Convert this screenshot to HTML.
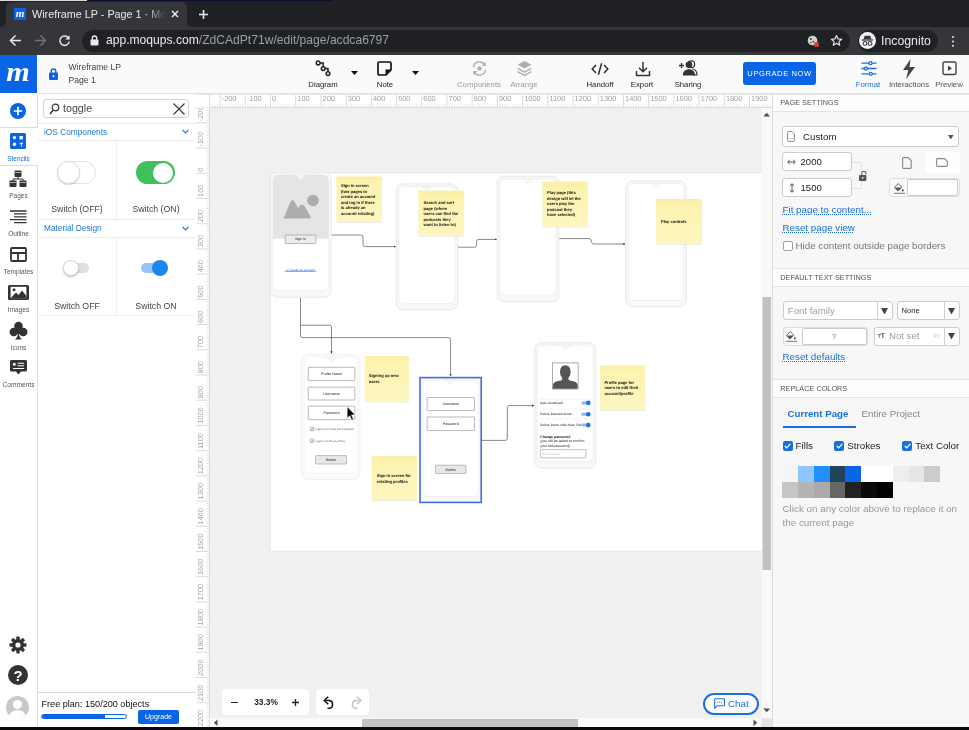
<!DOCTYPE html>
<html><head><meta charset="utf-8">
<style>
*{box-sizing:border-box;margin:0;padding:0}
html,body{width:969px;height:730px;overflow:hidden;background:#fff;font-family:"Liberation Sans",sans-serif;}
.abs{position:absolute}
#root{position:relative;width:969px;height:730px;overflow:hidden;background:#fff;will-change:transform}
/* chrome */
#tabbar{left:0;top:0;width:969px;height:27px;background:#202124}
#tab{left:6px;top:2px;width:181px;height:25px;background:#35363a;border-radius:7px 7px 0 0}
#navbar{left:0;top:27px;width:969px;height:28px;background:#35363a}
#omni{left:82px;top:30px;width:768px;height:22px;border-radius:11px;background:#202124}
.ct{color:#e8eaed;font-size:12px;white-space:nowrap}
/* app header */
#hdr{left:0;top:55px;width:969px;height:39px;background:#fafafa;border-bottom:1px solid #e2e2e2}
#logo{left:0;top:55px;width:37px;height:38px;background:#0a64e6}
.tb{font-size:7.750px;color:#222;text-align:center;white-space:nowrap}
.tb.dis{color:#9a9a9a}
/* left bar */
#lbar{left:0;top:93px;width:38px;height:637px;background:#fff;border-right:1px solid #e0e0e0}
.ll{font-size:6.5px;color:#555;text-align:center;width:37px;left:0;white-space:nowrap}
#lpanel{left:38px;top:94px;width:157px;height:636px;background:#fff}
/* canvas */
#canvas{left:195px;top:94px;width:577px;height:636px;background:#f0f0f0}
#rulerh{left:195px;top:94px;width:577px;height:13px;background:#fff}
#rulerv{left:195px;top:107px;width:13px;height:623px;background:#fff}
.rn{font-size:8px;color:#999;white-space:nowrap}
#page{left:270px;top:173px;width:492px;height:376px;background:#fff}
/* right panel */
#rpanel{left:772px;top:94px;width:197px;height:636px;background:#f7f7f7;border-left:1px solid #dcdcdc}
.sech{font-size:7px;color:#555;white-space:nowrap}
.link{font-size:9px;color:#1a6fd8;text-decoration:underline dotted;white-space:nowrap}
.inp{background:#fff;border:1px solid #ccc;border-radius:2px}
</style></head><body><div id="root">

<!-- ===== BROWSER CHROME ===== -->
<div id="tabbar" class="abs"></div>
<div class="abs" style="left:0;top:0;width:87px;height:1px;background:#dcd8d2"></div><div class="abs" style="left:87px;top:0;width:245px;height:1px;background:#10102c"></div>
<svg class="abs" style="left:0;top:0" width="200" height="27" viewBox="0 0 200 27"><path d="M0 27Q6 27 6 21V8Q6 2 12 2H181Q187 2 187 8V21Q187 27 193 27Z" fill="#35363a"/></svg>
<div class="abs" style="left:14px;top:8px;width:12px;height:12px;background:#0a64e6"></div>
<div class="abs" style="left:14px;top:7px;width:12px;height:12px;color:#fff;font:italic bold 11px 'Liberation Serif',serif;text-align:center;line-height:12px">m</div>
<div id="tabtitle" class="abs ct" style="left:32px;top:7px;font-size:10.8px;width:134px;overflow:hidden;line-height:14px;-webkit-mask-image:linear-gradient(90deg,#000 85%,transparent 100%)">Wireframe LP - Page 1 · Moqups</div>
<svg class="abs" style="left:171px;top:10px" width="8" height="8" viewBox="0 0 8 8"><path d="M1 1L7 7M7 1L1 7" stroke="#e8eaed" stroke-width="1.5" fill="none"/></svg>
<svg class="abs" style="left:198px;top:9px" width="11" height="11" viewBox="0 0 11 11"><path d="M5.5 1V10M1 5.5H10" stroke="#e8eaed" stroke-width="1.6" fill="none"/></svg>
<div id="navbar" class="abs"></div>
<svg class="abs" style="left:9px;top:34px" width="13" height="13" viewBox="0 0 13 13"><path d="M12 6.5H2M6.5 1.5L1.5 6.5L6.5 11.5" stroke="#e8eaed" stroke-width="1.5" fill="none"/></svg>
<svg class="abs" style="left:34px;top:34px" width="13" height="13" viewBox="0 0 13 13"><path d="M1 6.5H11M6.5 1.5L11.5 6.5L6.5 11.5" stroke="#6e7175" stroke-width="1.5" fill="none"/></svg>
<svg class="abs" style="left:58px;top:34px" width="13" height="13" viewBox="0 0 13 13"><path d="M10.6 4.2A4.7 4.7 0 1 0 11.2 7.6" stroke="#e8eaed" stroke-width="1.5" fill="none"/><path d="M11.6 1.2V5.4H7.4Z" fill="#e8eaed"/></svg>
<div id="omni" class="abs"></div>
<svg class="abs" style="left:90px;top:35px" width="9" height="11" viewBox="0 0 9 11"><rect x="0.5" y="4.5" width="8" height="6" rx="1" fill="#e8eaed"/><path d="M2.3 5V3.2a2.2 2.2 0 0 1 4.4 0V5" stroke="#e8eaed" stroke-width="1.3" fill="none"/></svg>
<div id="url" class="abs ct" style="left:106px;top:33px;font-size:12.1px;line-height:14px">app.moqups.com<span style="color:#9aa0a6">/ZdCAdPt71w/edit/page/acdca6797</span></div>
<!-- cookie/eye icon -->
<svg class="abs" style="left:806px;top:34px" width="14" height="14" viewBox="0 0 14 14"><circle cx="6.5" cy="6.5" r="4.8" fill="#cfd1d4"/><circle cx="4.8" cy="5" r="1" fill="#35363a"/><circle cx="7.5" cy="7.6" r="0.9" fill="#35363a"/><circle cx="5" cy="8.5" r="0.7" fill="#35363a"/><rect x="8.3" y="8.3" width="4.4" height="4.4" rx="0.6" fill="#e0452c"/></svg>
<svg class="abs" style="left:830px;top:34px" width="13" height="13" viewBox="0 0 14 14"><path d="M7 1.6L8.6 5.3L12.6 5.6L9.5 8.2L10.5 12.1L7 10L3.5 12.1L4.5 8.2L1.4 5.6L5.4 5.3Z" stroke="#e8eaed" stroke-width="1.2" fill="none" stroke-linejoin="round"/></svg>
<div class="abs" style="left:858px;top:30px;width:80px;height:22px;border-radius:11px;background:#202124"></div>
<div class="abs" style="left:859px;top:32px;width:17px;height:17px;border-radius:50%;background:#f1f3f4"></div>
<svg class="abs" style="left:861px;top:35px" width="13" height="12" viewBox="0 0 13 12"><path d="M3.6 0.8h5.8l1 3.4H2.6Z" fill="#35363a"/><rect x="0.8" y="4.4" width="11.4" height="1.2" fill="#35363a"/><circle cx="4" cy="8.4" r="1.9" fill="none" stroke="#35363a" stroke-width="1.1"/><circle cx="9" cy="8.4" r="1.9" fill="none" stroke="#35363a" stroke-width="1.1"/></svg>
<div class="abs ct" style="left:881px;top:34px;font-size:12.3px;line-height:14px">Incognito</div>
<div class="abs" style="left:951.8px;top:35.5px;width:2.6px;height:2.6px;border-radius:50%;background:#e8eaed;box-shadow:0 4.4px 0 #e8eaed,0 8.8px 0 #e8eaed"></div>

<!-- ===== APP HEADER ===== -->
<div id="hdr" class="abs"></div>
<div id="logo" class="abs"></div>
<div class="abs" style="left:0;top:55px;width:37px;height:37px;color:#fff;font:italic bold 28px 'Liberation Serif',serif;text-align:center;line-height:37px;transform:translate(-0.5px,-2.2px) scaleX(1.08)">m</div>
<!-- lock -->
<svg class="abs" style="left:49px;top:68px" width="9" height="12" viewBox="0 0 9 12"><rect x="0" y="4.5" width="9" height="7.5" rx="1" fill="#0a64e6"/><path d="M2.2 5V3.3a2.3 2.3 0 0 1 4.6 0V5" stroke="#0a64e6" stroke-width="1.4" fill="none"/><circle cx="4.5" cy="8.2" r="1" fill="#fff"/></svg>
<div class="abs" style="left:68.5px;top:62px;font-size:8.6px;color:#444;line-height:10px;white-space:nowrap">Wireframe LP</div>
<div class="abs" style="left:68.5px;top:75px;font-size:8.6px;color:#444;line-height:10px;white-space:nowrap">Page 1</div>

<!-- Diagram -->
<svg class="abs" style="left:315px;top:60px" width="17" height="17" viewBox="0 0 17 17"><g fill="none" stroke="#222" stroke-width="1.5"><circle cx="3.2" cy="3" r="1.9"/><circle cx="8.2" cy="8.6" r="1.9"/><circle cx="13" cy="13.6" r="1.9"/><path d="M5 3H8.2V6.7M10.1 8.6H13V11.7"/></g></svg>
<div class="abs tb" style="left:303px;top:80px;width:40px">Diagram</div>
<svg class="abs" style="left:351px;top:71px" width="7" height="4" viewBox="0 0 7 4"><path d="M0 0H7L3.5 4Z" fill="#111"/></svg>
<!-- Note -->
<svg class="abs" style="left:377px;top:61px" width="15" height="15" viewBox="0 0 15 15"><path d="M2.5 1H12.5A1.5 1.5 0 0 1 14 2.500V9L9 14H2.5A1.500 1.500 0 0 1 1 12.500V2.500A1.500 1.500 0 0 1 2.500 1Z" fill="none" stroke="#111" stroke-width="1.7"/><path d="M14 8.500L8.500 14V8.500Z" fill="#111"/></svg>
<div class="abs tb" style="left:365px;top:80px;width:40px">Note</div>
<svg class="abs" style="left:412px;top:71px" width="7" height="4" viewBox="0 0 7 4"><path d="M0 0H7L3.5 4Z" fill="#111"/></svg>
<!-- Components -->
<svg class="abs" style="left:471px;top:60px" width="17" height="17" viewBox="0 0 17 17"><g fill="none" stroke="#b0b0b0" stroke-width="1.5"><path d="M2.5 7.5A6 6 0 0 1 13.8 5.200"/><path d="M14.500 9.500A6 6 0 0 1 3.200 11.800"/></g><path d="M14.800 1.800V6H10.600Z" fill="#b0b0b0"/><path d="M2.200 15.200V11H6.400Z" fill="#b0b0b0"/><circle cx="8.500" cy="8.500" r="2.200" fill="#b0b0b0"/></svg>
<div class="abs tb dis" style="left:452px;top:80px;width:54px">Components</div>
<!-- Arrange -->
<svg class="abs" style="left:516px;top:60px" width="17" height="17" viewBox="0 0 17 17"><path d="M8.500 1L15.500 4.800L8.500 8.600L1.500 4.800Z" fill="#b0b0b0"/><path d="M1.500 8.300L8.500 12.100L15.500 8.300M1.500 11.600L8.500 15.400L15.500 11.600" fill="none" stroke="#b0b0b0" stroke-width="1.400"/></svg>
<div class="abs tb dis" style="left:504px;top:80px;width:40px">Arrange</div>
<!-- Handoff -->
<svg class="abs" style="left:591px;top:62px" width="18" height="14" viewBox="0 0 18 14"><path d="M5 3L1.200 7L5 11M13 3L16.800 7L13 11M10.600 1.200L7.400 12.800" fill="none" stroke="#2a2a2a" stroke-width="1.500"/></svg>
<div class="abs tb" style="left:580px;top:80px;width:40px">Handoff</div>
<!-- Export -->
<svg class="abs" style="left:635px;top:61px" width="16" height="16" viewBox="0 0 16 16"><g fill="none" stroke="#333" stroke-width="1.500"><path d="M8 1V10.500M4 6.800L8 10.800L12 6.800"/><path d="M1.500 10V14.500H14.500V10"/></g></svg>
<div class="abs tb" style="left:622px;top:80px;width:40px">Export</div>
<!-- Sharing -->
<svg class="abs" style="left:678px;top:60px" width="20" height="16" viewBox="0 0 20 16"><path d="M1 5.500H6M3.500 3V8" stroke="#333" stroke-width="1.300" fill="none"/><circle cx="13.300" cy="4.300" r="3.400" fill="none" stroke="#333" stroke-width="1.200"/><path d="M14.500 9C18 9.500 19 12 19 15H15" fill="none" stroke="#333" stroke-width="1.200"/><circle cx="11" cy="4.800" r="3.300" fill="#333"/><path d="M4.800 15.500C4.800 11.500 7.500 9.300 11 9.300S17 11.500 17 15.500Z" fill="#333"/></svg>
<div class="abs tb" style="left:668px;top:80px;width:40px">Sharing</div>
<!-- Upgrade -->
<div class="abs" style="left:743px;top:62px;width:73px;height:23px;border-radius:3px;background:#0a64e6;color:#fff;font-size:7.600px;letter-spacing:.55px;text-align:center;line-height:23px;white-space:nowrap">UPGRADE NOW</div>
<!-- Format -->
<svg class="abs" style="left:861px;top:61px" width="16" height="15" viewBox="0 0 16 15"><g stroke="#1a6fe0" stroke-width="1.300" fill="#fafafa"><path d="M0.500 2.200H15.500M0.500 7.500H15.500M0.500 12.800H15.500" /><circle cx="9.500" cy="2.200" r="1.500"/><circle cx="4.800" cy="7.500" r="1.500"/><circle cx="9.800" cy="12.800" r="1.500"/></g></svg>
<div class="abs tb" style="left:848px;top:80px;width:40px;color:#1a6fe0">Format</div>
<!-- Interactions -->
<svg class="abs" style="left:901.500px;top:58.500px" width="14" height="20" viewBox="0 0 13 19"><path d="M8 0L0.800 10.500H5.800L3.800 19L12.200 7.500H7Z" fill="#444"/></svg>
<div class="abs tb" style="left:884px;top:80px;width:50px;color:#555">Interactions</div>
<!-- Preview -->
<svg class="abs" style="left:942px;top:61px" width="15" height="15" viewBox="0 0 15 15"><rect x="1" y="1" width="13" height="12.500" rx="1.500" fill="none" stroke="#444" stroke-width="1.400"/><path d="M6 4.500L10 7.300L6 10Z" fill="#444"/></svg>
<div class="abs tb" style="left:929px;top:80px;width:40px;color:#555">Preview</div>

<!-- ===== LEFT BAR ===== -->
<div id="lbar" class="abs"></div>
<div class="abs" style="left:0;top:127px;width:38px;height:1px;background:#dcdcdc"></div>
<div class="abs" style="left:0;top:128px;width:38px;height:37px;background:#fff"></div>
<div class="abs" style="left:0;top:165px;width:38px;height:1px;background:#dcdcdc"></div>
<!-- plus -->
<div class="abs" style="left:10px;top:102.500px;width:16px;height:16px;border-radius:50%;background:#0a64e6"></div>
<svg class="abs" style="left:13px;top:105.500px" width="10" height="10" viewBox="0 0 10 10"><path d="M5 0.800V9.200M0.800 5H9.200" stroke="#fff" stroke-width="1.700"/></svg>
<!-- stencils -->
<svg class="abs" style="left:10px;top:133px" width="16" height="16" viewBox="0 0 16 16"><rect width="16" height="16" rx="1.500" fill="#0a64e6"/><circle cx="4.500" cy="4.600" r="1.700" fill="#fff"/><rect x="9.500" y="3" width="3.400" height="3.400" fill="#fff"/><circle cx="4.500" cy="11.300" r="1.700" fill="#fff"/><path d="M9.600 9.800H13V10.800H11.800V13.400H10.800V10.800H9.600Z" fill="#fff"/></svg>
<div class="abs ll" style="top:155px;color:#1a6fe0;font-size:6.400px;line-height:8px">Stencils</div>
<!-- pages -->
<svg class="abs" style="left:9px;top:170px" width="18" height="18" viewBox="0 0 18 18"><g fill="#333"><rect x="5.500" y="0.500" width="7" height="6.500" rx="1"/><rect x="0.500" y="10.500" width="7" height="6.500" rx="1"/><rect x="10.500" y="10.500" width="7" height="6.500" rx="1"/></g><path d="M9 7V9H4V10.500M9 9H14V10.500" stroke="#333" stroke-width="1" fill="none"/><path d="M6 2.500H12M1 12.500H7M11 12.500H17" stroke="#fff" stroke-width=".6"/></svg>
<div class="abs ll" style="top:192px;font-size:6.500px;line-height:8px">Pages</div>
<!-- outline -->
<svg class="abs" style="left:10px;top:210px" width="17" height="14" viewBox="0 0 17 14"><path d="M0 1H16.500M4 3.900H16.500M4 6.800H16.500M0 9.700H16.500M4 12.600H16.500" stroke="#333" stroke-width="1.300"/></svg>
<div class="abs ll" style="top:230px;font-size:6.500px;line-height:8px">Outline</div>
<!-- templates -->
<svg class="abs" style="left:10px;top:247px" width="17" height="15" viewBox="0 0 17 15"><rect x="1" y="1" width="15" height="13" rx="1" fill="none" stroke="#333" stroke-width="1.800"/><path d="M1 6H16M8 6V14" stroke="#333" stroke-width="1.800"/></svg>
<div class="abs ll" style="top:268px;font-size:6.500px;line-height:8px">Templates</div>
<!-- images -->
<svg class="abs" style="left:8px;top:285px" width="21" height="15" viewBox="0 0 21 15"><rect x="0" y="0" width="21" height="15" rx="1.500" fill="#333"/><rect x="2.600" y="1.800" width="15.800" height="11.400" fill="#fff"/><path d="M2.600 13.200L8 7.500L10.500 10L14 5.500L18.400 11V13.200Z" fill="#333"/><circle cx="6" cy="4.800" r="1.500" fill="#333"/></svg>
<div class="abs ll" style="top:306px;font-size:6.500px;line-height:8px">Images</div>
<!-- icons (club) -->
<svg class="abs" style="left:9px;top:321px" width="19" height="19" viewBox="0 0 19 19"><g fill="#333"><circle cx="9.500" cy="5" r="4.300"/><circle cx="4.800" cy="11" r="4.300"/><circle cx="14.200" cy="11" r="4.300"/><path d="M9.500 8C9.500 14 8 17 6 18.500H13C11 17 9.500 14 9.500 8Z"/><rect x="7" y="8" width="5" height="5"/></g></svg>
<div class="abs ll" style="top:344px;font-size:6.500px;line-height:8px">Icons</div>
<!-- comments -->
<svg class="abs" style="left:10px;top:360px" width="17" height="15" viewBox="0 0 17 15"><path d="M1.500 0H15.500A1.500 1.500 0 0 1 17 1.500V10A1.500 1.500 0 0 1 15.500 11.500H11L8.500 14.500L6 11.500H1.500A1.500 1.500 0 0 1 0 10V1.500A1.500 1.500 0 0 1 1.500 0Z" fill="#333"/><circle cx="4.300" cy="4.200" r="1.500" fill="#fff"/><path d="M7.500 3.300H14M7.500 5.800H14M3 8.500H14" stroke="#fff" stroke-width="1.100"/></svg>
<div class="abs ll" style="top:381px;font-size:6.600px;line-height:8px">Comments</div>
<!-- gear -->
<svg class="abs" style="left:9px;top:636px" width="18" height="18" viewBox="0 0 18 18"><g fill="#333"><circle cx="9" cy="9" r="6"/><g><rect x="7.300" y="0.500" width="3.400" height="17" rx=".8"/><rect x="7.300" y="0.500" width="3.400" height="17" rx=".8" transform="rotate(45 9 9)"/><rect x="7.300" y="0.500" width="3.400" height="17" rx=".8" transform="rotate(90 9 9)"/><rect x="7.300" y="0.500" width="3.400" height="17" rx=".8" transform="rotate(135 9 9)"/></g></g><circle cx="9" cy="9" r="2.600" fill="#fff"/></svg>
<!-- help -->
<div class="abs" style="left:8px;top:665px;width:20px;height:20px;border-radius:50%;background:#333;color:#fff;font:bold 15px 'Liberation Sans',sans-serif;text-align:center;line-height:21px">?</div>
<!-- avatar -->
<div class="abs" style="left:6px;top:696px;width:23px;height:23px;border-radius:50%;background:#c8c8c8;overflow:hidden"><div class="abs" style="left:7px;top:4px;width:9px;height:9px;border-radius:50%;background:#fff"></div><div class="abs" style="left:3px;top:14px;width:17px;height:14px;border-radius:50%;background:#fff"></div></div>

<div id="lpanel" class="abs"></div>
<!-- search -->
<div class="abs" style="left:43px;top:99px;width:146px;height:19px;border:1px solid #d4d4d4;border-radius:3px;background:#fff"></div>
<svg class="abs" style="left:49px;top:103px" width="11" height="12" viewBox="0 0 11 12"><circle cx="6.500" cy="4.500" r="3.300" fill="none" stroke="#333" stroke-width="1.200"/><path d="M4.300 7L1 11" stroke="#333" stroke-width="1.400"/></svg>
<div class="abs" style="left:63px;top:102px;font-size:10.700px;color:#444;line-height:13px">toggle</div>
<svg class="abs" style="left:173px;top:103px" width="12" height="12" viewBox="0 0 12 12"><path d="M0.500 0.500L11.500 11.500M11.500 0.500L0.500 11.500" stroke="#333" stroke-width="1.100"/></svg>
<!-- iOS -->
<div class="abs" style="left:38px;top:123px;width:157px;height:1px;background:#ececec"></div>
<div class="abs" style="left:44px;top:127px;font-size:8.300px;color:#1a78d6;line-height:10px;white-space:nowrap">iOS Components</div>
<svg class="abs" style="left:182px;top:129px" width="7" height="5" viewBox="0 0 7 5"><path d="M0.500 0.800L3.500 3.800L6.500 0.800" fill="none" stroke="#1a78d6" stroke-width="1.200"/></svg>
<div class="abs" style="left:38px;top:140px;width:157px;height:1px;background:#ececec"></div>
<div class="abs" style="left:116px;top:141px;width:1px;height:78px;background:#f1f1f1"></div>
<div class="abs" style="left:57px;top:161px;width:39px;height:23px;border-radius:12px;border:1.500px solid #e2e2e2;background:#fff"></div>
<div class="abs" style="left:57px;top:161px;width:23px;height:23px;border-radius:50%;border:1px solid #dedede;background:#fff;box-shadow:0 1px 1.500px rgba(0,0,0,.15)"></div>
<div class="abs" style="left:136px;top:161px;width:39px;height:23px;border-radius:12px;background:#3ec15a"></div>
<div class="abs" style="left:153px;top:162.500px;width:20px;height:20px;border-radius:50%;background:#fff"></div>
<div class="abs" style="left:38px;top:204px;width:78px;text-align:center;font-size:8.750px;color:#444;line-height:11px;white-space:nowrap">Switch (OFF)</div>
<div class="abs" style="left:117px;top:204px;width:78px;text-align:center;font-size:8.750px;color:#444;line-height:11px;white-space:nowrap">Switch (ON)</div>
<!-- Material -->
<div class="abs" style="left:38px;top:219px;width:157px;height:1px;background:#ececec"></div>
<div class="abs" style="left:44px;top:223px;font-size:8.300px;color:#1a78d6;line-height:10px;white-space:nowrap">Material Design</div>
<svg class="abs" style="left:182px;top:226px" width="7" height="5" viewBox="0 0 7 5"><path d="M0.500 0.800L3.500 3.800L6.500 0.800" fill="none" stroke="#1a78d6" stroke-width="1.200"/></svg>
<div class="abs" style="left:38px;top:237px;width:157px;height:1px;background:#ececec"></div>
<div class="abs" style="left:116px;top:238px;width:1px;height:77px;background:#f1f1f1"></div>
<div class="abs" style="left:38px;top:315px;width:157px;height:1px;background:#f0f0f0"></div>
<div class="abs" style="left:68px;top:263px;width:21px;height:10px;border-radius:5px;background:#e0e0e0"></div>
<div class="abs" style="left:63px;top:260px;width:16px;height:16px;border-radius:50%;background:#fff;border:1px solid #d8d8d8;box-shadow:0 1px 2px rgba(0,0,0,.25)"></div>
<div class="abs" style="left:141px;top:263px;width:21px;height:10px;border-radius:5px;background:#93c5fb"></div>
<div class="abs" style="left:152px;top:260px;width:16px;height:16px;border-radius:50%;background:#1f85ea"></div>
<div class="abs" style="left:38px;top:301px;width:78px;text-align:center;font-size:8.750px;color:#444;line-height:11px;white-space:nowrap">Switch OFF</div>
<div class="abs" style="left:117px;top:301px;width:78px;text-align:center;font-size:8.750px;color:#444;line-height:11px;white-space:nowrap">Switch ON</div>
<!-- free plan -->
<div class="abs" style="left:38px;top:692px;width:157px;height:1px;background:#d8d8d8"></div>
<div class="abs" style="left:41.500px;top:699px;font-size:9.100px;color:#111;line-height:11px;white-space:nowrap">Free plan: 150/200 objects</div>
<div class="abs" style="left:41px;top:714px;width:86px;height:5px;border-radius:3px;border:1px solid #0a64e6;background:#fff;overflow:hidden"><div style="width:63px;height:5px;background:#0a64e6;margin-top:-1px"></div></div>
<div class="abs" style="left:138px;top:710px;width:41px;height:14px;border-radius:2px;background:#0a64e6;color:#fff;font-size:7px;text-align:center;line-height:14px">Upgrade</div>
<div class="abs" style="left:195px;top:94px;width:1px;height:633px;background:#d8d8d8"></div>

<!-- ===== CANVAS ===== -->
<svg class="abs" style="left:195px;top:94px" width="577" height="633" viewBox="195 94 577 633" font-family="Liberation Sans, sans-serif" text-rendering="geometricPrecision">
<defs><linearGradient id="ng" x1="0" y1="0" x2="0" y2="1"><stop offset="0" stop-color="#fbefa2"/><stop offset=".15" stop-color="#fcf3b0"/><stop offset="1" stop-color="#fdf6bf"/></linearGradient><marker id="ah" markerWidth="4" markerHeight="4" refX="3.2" refY="2" orient="auto"><path d="M0 0.500L3.400 2L0 3.500Z" fill="#333"/></marker></defs>
<rect x="195" y="94" width="577" height="633" fill="#f0f0f0"/>
<rect x="270.5" y="173.3" width="501.5" height="378" fill="#fff"/>
<rect x="270" y="172.8" width="501.5" height="378.5" fill="none" stroke="#e6e6e6" stroke-width="1"/>
<path d="M331 235H361Q363 235 363 237V244.500Q363 246.600 365 246.600H396" fill="none" stroke="#555" stroke-width="0.700" marker-end="url(#ah)"/>
<path d="M457.500 247.200H474.500Q476.500 247.200 476.500 245.200V241.400Q476.500 239.400 478.500 239.400H497" fill="none" stroke="#555" stroke-width="0.700" marker-end="url(#ah)"/>
<path d="M559 238.600H589Q590.500 238.600 591 240L592 243Q592.500 244 594 244H625.500" fill="none" stroke="#555" stroke-width="0.700" marker-end="url(#ah)"/>
<path d="M300.500 297V335.500Q300.500 337.600 302.500 337.600H448.500Q450.600 337.600 450.600 339.600V376" fill="none" stroke="#555" stroke-width="0.700" marker-end="url(#ah)"/>
<path d="M300.500 325.200H329.500Q331.500 325.200 331.500 327.200V353.500" fill="none" stroke="#555" stroke-width="0.700" marker-end="url(#ah)"/>
<path d="M482 440.400H505.300Q507.300 440.400 507.300 438.400V407.600Q507.300 405.600 509.300 405.600H534.300" fill="none" stroke="#555" stroke-width="0.700" marker-end="url(#ah)"/>
<rect x="270.5" y="172.3" width="60.6" height="125" rx="6.500" fill="#f8f8f8" stroke="#e9e9e9" stroke-width="1"/>
<rect x="273" y="174.9" width="55.6" height="116" rx="5" fill="#fff" stroke="#ebebeb" stroke-width="0.800"/>
<path d="M273 179.9A5 5 0 0 1 278 174.9H323.6A5 5 0 0 1 328.6 179.9V238.800H273Z" fill="#e5e5e5"/>
<path d="M295 174.9Q297 174.9 297.7 176.6Q299.1 179.5 300.6 179.5Q302.1 179.5 303.5 176.6Q304.2 174.9 306.2 174.9Z" fill="#fcfcfc" stroke="#e9e9e9" stroke-width="0.700"/>
<circle cx="300.6" cy="176.5" r="1.100" fill="#f8f8f8" stroke="#e8e8e8" stroke-width="0.500"/>
<path d="M283.500 218.500L290.500 201.500Q292.500 198.500 294.500 201.500L298 208L300.500 205Q302.500 203.500 304.500 206L310.500 216.500Q311.500 218.500 309.500 218.500Z" fill="#adadad"/>
<circle cx="313" cy="200.500" r="5.800" fill="#adadad"/>
<rect x="285.2" y="235" width="30.6" height="8.5" rx="0.600" fill="#ececec" stroke="#8e8e8e" stroke-width="0.600"/>
<text x="300.5" y="240.45" font-size="3.6" text-anchor="middle" fill="#1c1c1c">Sign In</text>
<text x="300.500" y="270.600" font-size="3.200" text-anchor="middle" fill="#1a73e8" text-decoration="underline">or create an account</text>
<path d="M284.300 271.500H316.700" stroke="#1a73e8" stroke-width="0.400"/>
<rect x="337.3" y="178" width="44.3" height="45" fill="#000" opacity=".07"/>
<rect x="336.3" y="176.5" width="45.3" height="45.5" fill="url(#ng)"/>
<text x="341" y="187" font-size="4.05" font-weight="bold" fill="#15120a">Sign in screen</text>
<text x="341" y="192.6" font-size="4.05" font-weight="bold" fill="#15120a">(two pages to</text>
<text x="341" y="198.2" font-size="4.05" font-weight="bold" fill="#15120a">create an account</text>
<text x="341" y="203.8" font-size="4.05" font-weight="bold" fill="#15120a">and log in if there</text>
<text x="341" y="209.4" font-size="4.05" font-weight="bold" fill="#15120a">is already an</text>
<text x="341" y="215" font-size="4.05" font-weight="bold" fill="#15120a">account existing)</text>
<rect x="396.3" y="183.9" width="61.2" height="126" rx="6.500" fill="#f8f8f8" stroke="#e9e9e9" stroke-width="1"/>
<rect x="398.8" y="186.5" width="56.2" height="117" rx="5" fill="#fff" stroke="#ebebeb" stroke-width="0.800"/>
<path d="M421.4 186.5Q423.4 186.5 424.1 188.2Q425.5 191.1 427 191.1Q428.5 191.1 429.9 188.2Q430.6 186.5 432.6 186.5Z" fill="#fcfcfc" stroke="#e9e9e9" stroke-width="0.700"/>
<circle cx="427" cy="188.1" r="1.100" fill="#f8f8f8" stroke="#e8e8e8" stroke-width="0.500"/>
<rect x="419.3" y="192.2" width="44.8" height="44.7" fill="#000" opacity=".07"/>
<rect x="418.3" y="190.7" width="45.8" height="45.2" fill="url(#ng)"/>
<text x="423.6" y="203.9" font-size="4.05" font-weight="bold" fill="#15120a">Search and sort</text>
<text x="423.6" y="209.5" font-size="4.05" font-weight="bold" fill="#15120a">page (where</text>
<text x="423.6" y="215.1" font-size="4.05" font-weight="bold" fill="#15120a">users can find the</text>
<text x="423.6" y="220.7" font-size="4.05" font-weight="bold" fill="#15120a">podcasts they</text>
<text x="423.6" y="226.3" font-size="4.05" font-weight="bold" fill="#15120a">want to listen to)</text>
<rect x="497.3" y="176.3" width="61.5" height="125.3" rx="6.500" fill="#f8f8f8" stroke="#e9e9e9" stroke-width="1"/>
<rect x="499.8" y="178.9" width="56.5" height="116.3" rx="5" fill="#fff" stroke="#ebebeb" stroke-width="0.800"/>
<path d="M522.4 178.9Q524.4 178.9 525.1 180.6Q526.5 183.5 528 183.5Q529.5 183.5 530.9 180.6Q531.6 178.9 533.6 178.9Z" fill="#fcfcfc" stroke="#e9e9e9" stroke-width="0.700"/>
<circle cx="528" cy="180.5" r="1.100" fill="#f8f8f8" stroke="#e8e8e8" stroke-width="0.500"/>
<rect x="543.4" y="182.9" width="44.2" height="44.7" fill="#000" opacity=".07"/>
<rect x="542.4" y="181.4" width="45.2" height="45.2" fill="url(#ng)"/>
<text x="547.1" y="194" font-size="4.05" font-weight="bold" fill="#15120a">Play page (this</text>
<text x="547.1" y="199.6" font-size="4.05" font-weight="bold" fill="#15120a">design will let the</text>
<text x="547.1" y="205.2" font-size="4.05" font-weight="bold" fill="#15120a">users play the</text>
<text x="547.1" y="210.8" font-size="4.05" font-weight="bold" fill="#15120a">podcast they</text>
<text x="547.1" y="216.4" font-size="4.05" font-weight="bold" fill="#15120a">have selected)</text>
<rect x="625.7" y="181" width="60.6" height="125.8" rx="6.500" fill="#f8f8f8" stroke="#e9e9e9" stroke-width="1"/>
<rect x="628.2" y="183.6" width="55.6" height="116.8" rx="5" fill="#fff" stroke="#ebebeb" stroke-width="0.800"/>
<path d="M650.4 183.6Q652.4 183.6 653.1 185.3Q654.5 188.2 656 188.2Q657.5 188.2 658.9 185.3Q659.6 183.6 661.6 183.6Z" fill="#fcfcfc" stroke="#e9e9e9" stroke-width="0.700"/>
<circle cx="656" cy="185.2" r="1.100" fill="#f8f8f8" stroke="#e8e8e8" stroke-width="0.500"/>
<rect x="656.9" y="200.4" width="44.8" height="44.7" fill="#000" opacity=".07"/>
<rect x="655.9" y="198.9" width="45.8" height="45.2" fill="url(#ng)"/>
<text x="661" y="222.8" font-size="4.05" font-weight="bold" fill="#15120a">Play controls</text>
<rect x="301.6" y="354.5" width="58.3" height="125.1" rx="6.500" fill="#fbfbfb" stroke="#f1f1f1" stroke-width="1"/>
<rect x="304.1" y="357.1" width="53.3" height="116.1" rx="5" fill="#fff" stroke="#f3f3f3" stroke-width="0.800"/>
<path d="M325.9 357.1Q327.9 357.1 328.6 358.8Q330 361.7 331.5 361.7Q333 361.7 334.4 358.8Q335.1 357.1 337.1 357.1Z" fill="#fcfcfc" stroke="#e9e9e9" stroke-width="0.700"/>
<circle cx="331.5" cy="358.7" r="1.100" fill="#f8f8f8" stroke="#e8e8e8" stroke-width="0.500"/>
<rect x="308.2" y="367.3" width="46.6" height="13.3" rx="0.600" fill="#fff" stroke="#8c8c8c" stroke-width="0.600"/>
<text x="331.5" y="375.15" font-size="3.6" text-anchor="middle" fill="#1c1c1c">Profile Name</text>
<rect x="308.2" y="387.1" width="46.6" height="12.9" rx="0.600" fill="#fff" stroke="#8c8c8c" stroke-width="0.600"/>
<text x="331.5" y="394.75" font-size="3.6" text-anchor="middle" fill="#1c1c1c">Username</text>
<rect x="308.2" y="406.2" width="46.6" height="13.5" rx="0.600" fill="#fff" stroke="#8c8c8c" stroke-width="0.600"/>
<text x="331.5" y="414.15" font-size="3.6" text-anchor="middle" fill="#1c1c1c">Password</text>
<rect x="310.300" y="427.3" width="3.400" height="3.400" rx=".4" fill="#fff" stroke="#777" stroke-width="0.500"/>
<path d="M311 429L311.900 429.9L313.300 428.1" stroke="#555" stroke-width="0.500" fill="none"/>
<text x="315" y="429.9" font-size="2.600" fill="#555">I agree with Terms and Conditions</text>
<rect x="310.300" y="439" width="3.400" height="3.400" rx=".4" fill="#fff" stroke="#777" stroke-width="0.500"/>
<path d="M311 440.7L311.900 441.6L313.300 439.8" stroke="#555" stroke-width="0.500" fill="none"/>
<text x="315" y="441.6" font-size="2.600" fill="#555">I agree with Privacy Policy</text>
<rect x="315.6" y="455.6" width="31" height="8.4" rx="0.600" fill="#e8e8e8" stroke="#999" stroke-width="0.600"/>
<text x="331.1" y="461" font-size="3.6" text-anchor="middle" fill="#1c1c1c">Button</text>
<rect x="365.6" y="357.7" width="43.3" height="44.7" fill="#000" opacity=".07"/>
<rect x="364.6" y="356.2" width="44.3" height="45.2" fill="url(#ng)"/>
<text x="368.8" y="377.2" font-size="4.05" font-weight="bold" fill="#15120a">Signing up new</text>
<text x="368.8" y="382.8" font-size="4.05" font-weight="bold" fill="#15120a">users</text>
<rect x="372.6" y="457.4" width="44.2" height="44" fill="#000" opacity=".07"/>
<rect x="371.6" y="455.9" width="45.2" height="44.5" fill="url(#ng)"/>
<text x="376.7" y="476.9" font-size="4.05" font-weight="bold" fill="#15120a">Sign in screen for</text>
<text x="376.7" y="482.5" font-size="4.05" font-weight="bold" fill="#15120a">existing profiles</text>
<rect x="420" y="377.300" width="61.200" height="125.200" fill="#fafafa"/>
<rect x="423" y="380" width="55.800" height="116.500" rx="5" fill="#fff" stroke="#ececec" stroke-width="0.800"/>
<path d="M445 380Q447 380 447.7 381.7Q449.1 384.6 450.6 384.6Q452.1 384.6 453.5 381.7Q454.2 380 456.2 380Z" fill="#fcfcfc" stroke="#e9e9e9" stroke-width="0.700"/>
<circle cx="450.6" cy="381.6" r="1.100" fill="#f8f8f8" stroke="#e8e8e8" stroke-width="0.500"/>
<rect x="420" y="377.600" width="61.200" height="124.800" fill="none" stroke="#426de0" stroke-width="1.600"/>
<rect x="427.1" y="397.5" width="47.4" height="13.1" rx="0.600" fill="#fff" stroke="#8c8c8c" stroke-width="0.600"/>
<text x="450.8" y="405.25" font-size="3.6" text-anchor="middle" fill="#1c1c1c">Username</text>
<rect x="427.1" y="417" width="47.4" height="13.6" rx="0.600" fill="#fff" stroke="#8c8c8c" stroke-width="0.600"/>
<text x="450.8" y="425" font-size="3.6" text-anchor="middle" fill="#1c1c1c">Password</text>
<rect x="435.5" y="465.2" width="30.4" height="8.3" rx="0.600" fill="#e8e8e8" stroke="#999" stroke-width="0.600"/>
<text x="450.7" y="470.55" font-size="3.6" text-anchor="middle" fill="#1c1c1c">Button</text>
<rect x="534.6" y="342.7" width="61.2" height="125.4" rx="6.500" fill="#f8f8f8" stroke="#e9e9e9" stroke-width="1"/>
<rect x="537.1" y="345.3" width="56.2" height="116.4" rx="5" fill="#fff" stroke="#ebebeb" stroke-width="0.800"/>
<path d="M559.6 345.3Q561.6 345.3 562.3 347Q563.7 349.9 565.2 349.9Q566.7 349.9 568.1 347Q568.8 345.3 570.8 345.3Z" fill="#fcfcfc" stroke="#e9e9e9" stroke-width="0.700"/>
<circle cx="565.2" cy="346.9" r="1.100" fill="#f8f8f8" stroke="#e8e8e8" stroke-width="0.500"/>
<rect x="552.500" y="362.900" width="25.600" height="26.100" fill="#fff" stroke="#777" stroke-width="0.600"/>
<path d="M553 388.800V385.500Q553 382.500 556.500 381.600L561.500 380.200Q562.600 379.600 562.200 378Q559.800 375.500 560 371.500Q560.400 365.300 565.300 365.300Q570.200 365.300 570.600 371.500Q570.800 375.500 568.400 378Q568 379.600 569.100 380.200L574.100 381.600Q577.600 382.500 577.600 385.500V388.800Z" fill="#555"/>
<text x="540" y="404" font-size="3.400" fill="#222">Auto-download</text>
<rect x="581.300" y="401.4" width="7.500" height="3" rx="1.500" fill="#8ab9f5"/>
<circle cx="588.300" cy="402.9" r="2.300" fill="#1a73e8"/>
<text x="540" y="415.3" font-size="3.400" fill="#222">Delete listened items</text>
<rect x="581.300" y="412.7" width="7.500" height="3" rx="1.500" fill="#8ab9f5"/>
<circle cx="588.300" cy="414.2" r="2.300" fill="#1a73e8"/>
<text x="540" y="426.2" font-size="3.400" fill="#222">Delete items older than 30d</text>
<rect x="581.300" y="423.6" width="7.500" height="3" rx="1.500" fill="#8ab9f5"/>
<circle cx="588.300" cy="425.1" r="2.300" fill="#1a73e8"/>
<path d="M539 399.2H591.500" stroke="#ececec" stroke-width="0.600"/>
<path d="M539 409H591.500" stroke="#ececec" stroke-width="0.600"/>
<path d="M539 418.9H591.500" stroke="#ececec" stroke-width="0.600"/>
<text x="540.200" y="437.700" font-size="3.500" font-weight="bold" fill="#222">Change password</text>
<text x="540.200" y="442.100" font-size="3.500" fill="#222">(you will be asked to confirm</text>
<text x="540.200" y="446.600" font-size="3.500" fill="#222">your old password)</text>
<rect x="540.300" y="449.600" width="45.700" height="8.200" rx=".5" fill="#fff" stroke="#999" stroke-width="0.600"/>
<text x="542" y="454.700" font-size="2.800" fill="#bbb">New password</text>
<rect x="600.7" y="366.8" width="44.4" height="44.3" fill="#000" opacity=".07"/>
<rect x="599.7" y="365.3" width="45.4" height="44.8" fill="url(#ng)"/>
<text x="604.4" y="383.7" font-size="4.05" font-weight="bold" fill="#15120a">Profile page for</text>
<text x="604.4" y="389.3" font-size="4.05" font-weight="bold" fill="#15120a">users to edit their</text>
<text x="604.4" y="394.9" font-size="4.05" font-weight="bold" fill="#15120a">account/profile</text>
<path d="M347.200 406.700V418.200L349.800 415.700L351.700 420L353.400 419.200L351.500 415L355 414.800Z" fill="#000" stroke="#fff" stroke-width="0.500"/>
<rect x="761.500" y="107" width="10.500" height="611" fill="#f9f9f9"/>
<rect x="762.500" y="297" width="8.500" height="273" fill="#c1c1c1"/>
<path d="M763.300 116.500L766.700 112.800L770.100 116.500Z" fill="#505050"/>
<path d="M763.300 708.500L766.700 712.200L770.100 708.500Z" fill="#505050"/>
<rect x="209" y="718" width="563" height="9" fill="#f9f9f9"/>
<rect x="362" y="719" width="216" height="8" fill="#c1c1c1"/>
<path d="M217.500 719.500L213.800 722.700L217.500 725.900Z" fill="#505050"/>
<path d="M753.500 719.500L757.200 722.700L753.500 725.900Z" fill="#505050"/>
<rect x="761.500" y="718" width="10.500" height="9" fill="#e4e4e4"/>
<rect x="195" y="94" width="577" height="13.500" fill="#fff"/>
<rect x="195" y="94" width="14.500" height="633" fill="#fff"/>
<path d="M195 107.500H772M209.500 94V727" stroke="#dedede" stroke-width="1"/>
<path d="M195 94.500H772" stroke="#e6e6e6" stroke-width="1"/>
<path d="M220.08 95V107.500" stroke="#d6d6d6" stroke-width="0.900"/>
<text x="221.68" y="100.800" font-size="7.400" fill="#a2a2a2">-200</text>
<path d="M245.29 95V107.500" stroke="#d6d6d6" stroke-width="0.900"/>
<text x="246.89" y="100.800" font-size="7.400" fill="#a2a2a2">-100</text>
<path d="M270.5 95V107.500" stroke="#d6d6d6" stroke-width="0.900"/>
<text x="272.1" y="100.800" font-size="7.400" fill="#a2a2a2">0</text>
<path d="M295.71 95V107.500" stroke="#d6d6d6" stroke-width="0.900"/>
<text x="297.31" y="100.800" font-size="7.400" fill="#a2a2a2">100</text>
<path d="M320.92 95V107.500" stroke="#d6d6d6" stroke-width="0.900"/>
<text x="322.52" y="100.800" font-size="7.400" fill="#a2a2a2">200</text>
<path d="M346.13 95V107.500" stroke="#d6d6d6" stroke-width="0.900"/>
<text x="347.73" y="100.800" font-size="7.400" fill="#a2a2a2">300</text>
<path d="M371.34 95V107.500" stroke="#d6d6d6" stroke-width="0.900"/>
<text x="372.94" y="100.800" font-size="7.400" fill="#a2a2a2">400</text>
<path d="M396.55 95V107.500" stroke="#d6d6d6" stroke-width="0.900"/>
<text x="398.15" y="100.800" font-size="7.400" fill="#a2a2a2">500</text>
<path d="M421.76 95V107.500" stroke="#d6d6d6" stroke-width="0.900"/>
<text x="423.36" y="100.800" font-size="7.400" fill="#a2a2a2">600</text>
<path d="M446.97 95V107.500" stroke="#d6d6d6" stroke-width="0.900"/>
<text x="448.57" y="100.800" font-size="7.400" fill="#a2a2a2">700</text>
<path d="M472.18 95V107.500" stroke="#d6d6d6" stroke-width="0.900"/>
<text x="473.78" y="100.800" font-size="7.400" fill="#a2a2a2">800</text>
<path d="M497.39 95V107.500" stroke="#d6d6d6" stroke-width="0.900"/>
<text x="498.99" y="100.800" font-size="7.400" fill="#a2a2a2">900</text>
<path d="M522.6 95V107.500" stroke="#d6d6d6" stroke-width="0.900"/>
<text x="524.2" y="100.800" font-size="7.400" fill="#a2a2a2">1000</text>
<path d="M547.81 95V107.500" stroke="#d6d6d6" stroke-width="0.900"/>
<text x="549.41" y="100.800" font-size="7.400" fill="#a2a2a2">1100</text>
<path d="M573.02 95V107.500" stroke="#d6d6d6" stroke-width="0.900"/>
<text x="574.62" y="100.800" font-size="7.400" fill="#a2a2a2">1200</text>
<path d="M598.23 95V107.500" stroke="#d6d6d6" stroke-width="0.900"/>
<text x="599.83" y="100.800" font-size="7.400" fill="#a2a2a2">1300</text>
<path d="M623.44 95V107.500" stroke="#d6d6d6" stroke-width="0.900"/>
<text x="625.04" y="100.800" font-size="7.400" fill="#a2a2a2">1400</text>
<path d="M648.65 95V107.500" stroke="#d6d6d6" stroke-width="0.900"/>
<text x="650.25" y="100.800" font-size="7.400" fill="#a2a2a2">1500</text>
<path d="M673.86 95V107.500" stroke="#d6d6d6" stroke-width="0.900"/>
<text x="675.46" y="100.800" font-size="7.400" fill="#a2a2a2">1600</text>
<path d="M699.07 95V107.500" stroke="#d6d6d6" stroke-width="0.900"/>
<text x="700.67" y="100.800" font-size="7.400" fill="#a2a2a2">1700</text>
<path d="M724.28 95V107.500" stroke="#d6d6d6" stroke-width="0.900"/>
<text x="725.88" y="100.800" font-size="7.400" fill="#a2a2a2">1800</text>
<path d="M749.49 95V107.500" stroke="#d6d6d6" stroke-width="0.900"/>
<text x="751.09" y="100.800" font-size="7.400" fill="#a2a2a2">1900</text>
<path d="M212.52 104.500V107.500M215.04 104.500V107.500M217.56 104.500V107.500M222.6 104.500V107.500M225.12 104.500V107.500M227.64 104.500V107.500M230.16 104.500V107.500M232.69 104.500V107.500M235.21 104.500V107.500M237.73 104.500V107.500M240.25 104.500V107.500M242.77 104.500V107.500M247.81 104.500V107.500M250.33 104.500V107.500M252.85 104.500V107.500M255.37 104.500V107.500M257.89 104.500V107.500M260.42 104.500V107.500M262.94 104.500V107.500M265.46 104.500V107.500M267.98 104.500V107.500M273.02 104.500V107.500M275.54 104.500V107.500M278.06 104.500V107.500M280.58 104.500V107.500M283.11 104.500V107.500M285.63 104.500V107.500M288.15 104.500V107.500M290.67 104.500V107.500M293.19 104.500V107.500M298.23 104.500V107.500M300.75 104.500V107.500M303.27 104.500V107.500M305.79 104.500V107.500M308.31 104.500V107.500M310.84 104.500V107.500M313.36 104.500V107.500M315.88 104.500V107.500M318.4 104.500V107.500M323.44 104.500V107.500M325.96 104.500V107.500M328.48 104.500V107.500M331 104.500V107.500M333.52 104.500V107.500M336.05 104.500V107.500M338.57 104.500V107.500M341.09 104.500V107.500M343.61 104.500V107.500M348.65 104.500V107.500M351.17 104.500V107.500M353.69 104.500V107.500M356.21 104.500V107.500M358.74 104.500V107.500M361.26 104.500V107.500M363.78 104.500V107.500M366.3 104.500V107.500M368.82 104.500V107.500M373.86 104.500V107.500M376.38 104.500V107.500M378.9 104.500V107.500M381.42 104.500V107.500M383.94 104.500V107.500M386.47 104.500V107.500M388.99 104.500V107.500M391.51 104.500V107.500M394.03 104.500V107.500M399.07 104.500V107.500M401.59 104.500V107.500M404.11 104.500V107.500M406.63 104.500V107.500M409.15 104.500V107.500M411.68 104.500V107.500M414.2 104.500V107.500M416.72 104.500V107.500M419.24 104.500V107.500M424.28 104.500V107.500M426.8 104.500V107.500M429.32 104.500V107.500M431.84 104.500V107.500M434.37 104.500V107.500M436.89 104.500V107.500M439.41 104.500V107.500M441.93 104.500V107.500M444.45 104.500V107.500M449.49 104.500V107.500M452.01 104.500V107.500M454.53 104.500V107.500M457.05 104.500V107.500M459.57 104.500V107.500M462.1 104.500V107.500M464.62 104.500V107.500M467.14 104.500V107.500M469.66 104.500V107.500M474.7 104.500V107.500M477.22 104.500V107.500M479.74 104.500V107.500M482.26 104.500V107.500M484.78 104.500V107.500M487.31 104.500V107.500M489.83 104.500V107.500M492.35 104.500V107.500M494.87 104.500V107.500M499.91 104.500V107.500M502.43 104.500V107.500M504.95 104.500V107.500M507.47 104.500V107.500M510 104.500V107.500M512.52 104.500V107.500M515.04 104.500V107.500M517.56 104.500V107.500M520.08 104.500V107.500M525.12 104.500V107.500M527.64 104.500V107.500M530.16 104.500V107.500M532.68 104.500V107.500M535.2 104.500V107.500M537.73 104.500V107.500M540.25 104.500V107.500M542.77 104.500V107.500M545.29 104.500V107.500M550.33 104.500V107.500M552.85 104.500V107.500M555.37 104.500V107.500M557.89 104.500V107.500M560.41 104.500V107.500M562.94 104.500V107.500M565.46 104.500V107.500M567.98 104.500V107.500M570.5 104.500V107.500M575.54 104.500V107.500M578.06 104.500V107.500M580.58 104.500V107.500M583.1 104.500V107.500M585.62 104.500V107.500M588.15 104.500V107.500M590.67 104.500V107.500M593.19 104.500V107.500M595.71 104.500V107.500M600.75 104.500V107.500M603.27 104.500V107.500M605.79 104.500V107.500M608.31 104.500V107.500M610.84 104.500V107.500M613.36 104.500V107.500M615.88 104.500V107.500M618.4 104.500V107.500M620.92 104.500V107.500M625.96 104.500V107.500M628.48 104.500V107.500M631 104.500V107.500M633.52 104.500V107.500M636.04 104.500V107.500M638.57 104.500V107.500M641.09 104.500V107.500M643.61 104.500V107.500M646.13 104.500V107.500M651.17 104.500V107.500M653.69 104.500V107.500M656.21 104.500V107.500M658.73 104.500V107.500M661.25 104.500V107.500M663.78 104.500V107.500M666.3 104.500V107.500M668.82 104.500V107.500M671.34 104.500V107.500M676.38 104.500V107.500M678.9 104.500V107.500M681.42 104.500V107.500M683.94 104.500V107.500M686.46 104.500V107.500M688.99 104.500V107.500M691.51 104.500V107.500M694.03 104.500V107.500M696.55 104.500V107.500M701.59 104.500V107.500M704.11 104.500V107.500M706.63 104.500V107.500M709.15 104.500V107.500M711.67 104.500V107.500M714.2 104.500V107.500M716.72 104.500V107.500M719.24 104.500V107.500M721.76 104.500V107.500M726.8 104.500V107.500M729.32 104.500V107.500M731.84 104.500V107.500M734.36 104.500V107.500M736.88 104.500V107.500M739.41 104.500V107.500M741.93 104.500V107.500M744.45 104.500V107.500M746.97 104.500V107.500M752.01 104.500V107.500M754.53 104.500V107.500M757.05 104.500V107.500M759.57 104.500V107.500M762.1 104.500V107.500M764.62 104.500V107.500M767.14 104.500V107.500M769.66 104.500V107.500" stroke="#d0d0d0" stroke-width="0.600"/>
<path d="M196 122.88H209.500" stroke="#d6d6d6" stroke-width="0.900"/>
<path d="M196 148.09H209.500" stroke="#d6d6d6" stroke-width="0.900"/>
<path d="M196 173.3H209.500" stroke="#d6d6d6" stroke-width="0.900"/>
<path d="M196 198.51H209.500" stroke="#d6d6d6" stroke-width="0.900"/>
<path d="M196 223.72H209.500" stroke="#d6d6d6" stroke-width="0.900"/>
<path d="M196 248.93H209.500" stroke="#d6d6d6" stroke-width="0.900"/>
<path d="M196 274.14H209.500" stroke="#d6d6d6" stroke-width="0.900"/>
<path d="M196 299.35H209.500" stroke="#d6d6d6" stroke-width="0.900"/>
<path d="M196 324.56H209.500" stroke="#d6d6d6" stroke-width="0.900"/>
<path d="M196 349.77H209.500" stroke="#d6d6d6" stroke-width="0.900"/>
<path d="M196 374.98H209.500" stroke="#d6d6d6" stroke-width="0.900"/>
<path d="M196 400.19H209.500" stroke="#d6d6d6" stroke-width="0.900"/>
<path d="M196 425.4H209.500" stroke="#d6d6d6" stroke-width="0.900"/>
<path d="M196 450.61H209.500" stroke="#d6d6d6" stroke-width="0.900"/>
<path d="M196 475.82H209.500" stroke="#d6d6d6" stroke-width="0.900"/>
<path d="M196 501.03H209.500" stroke="#d6d6d6" stroke-width="0.900"/>
<path d="M196 526.24H209.500" stroke="#d6d6d6" stroke-width="0.900"/>
<path d="M196 551.45H209.500" stroke="#d6d6d6" stroke-width="0.900"/>
<path d="M196 576.66H209.500" stroke="#d6d6d6" stroke-width="0.900"/>
<path d="M196 601.87H209.500" stroke="#d6d6d6" stroke-width="0.900"/>
<path d="M196 627.08H209.500" stroke="#d6d6d6" stroke-width="0.900"/>
<path d="M196 652.29H209.500" stroke="#d6d6d6" stroke-width="0.900"/>
<path d="M196 677.5H209.500" stroke="#d6d6d6" stroke-width="0.900"/>
<path d="M196 702.71H209.500" stroke="#d6d6d6" stroke-width="0.900"/>
<path d="M206.500 110.28H209.500M206.500 112.8H209.500M206.500 115.32H209.500M206.500 117.84H209.500M206.500 120.36H209.500M206.500 125.4H209.500M206.500 127.92H209.500M206.500 130.44H209.500M206.500 132.96H209.500M206.500 135.49H209.500M206.500 138.01H209.500M206.500 140.53H209.500M206.500 143.05H209.500M206.500 145.57H209.500M206.500 150.61H209.500M206.500 153.13H209.500M206.500 155.65H209.500M206.500 158.17H209.500M206.500 160.7H209.500M206.500 163.22H209.500M206.500 165.74H209.500M206.500 168.26H209.500M206.500 170.78H209.500M206.500 175.82H209.500M206.500 178.34H209.500M206.500 180.86H209.500M206.500 183.38H209.500M206.500 185.91H209.500M206.500 188.43H209.500M206.500 190.95H209.500M206.500 193.47H209.500M206.500 195.99H209.500M206.500 201.03H209.500M206.500 203.55H209.500M206.500 206.07H209.500M206.500 208.59H209.500M206.500 211.12H209.500M206.500 213.64H209.500M206.500 216.16H209.500M206.500 218.68H209.500M206.500 221.2H209.500M206.500 226.24H209.500M206.500 228.76H209.500M206.500 231.28H209.500M206.500 233.8H209.500M206.500 236.33H209.500M206.500 238.85H209.500M206.500 241.37H209.500M206.500 243.89H209.500M206.500 246.41H209.500M206.500 251.45H209.500M206.500 253.97H209.500M206.500 256.49H209.500M206.500 259.01H209.500M206.500 261.53H209.500M206.500 264.06H209.500M206.500 266.58H209.500M206.500 269.1H209.500M206.500 271.62H209.500M206.500 276.66H209.500M206.500 279.18H209.500M206.500 281.7H209.500M206.500 284.22H209.500M206.500 286.75H209.500M206.500 289.27H209.500M206.500 291.79H209.500M206.500 294.31H209.500M206.500 296.83H209.500M206.500 301.87H209.500M206.500 304.39H209.500M206.500 306.91H209.500M206.500 309.43H209.500M206.500 311.96H209.500M206.500 314.48H209.500M206.500 317H209.500M206.500 319.52H209.500M206.500 322.04H209.500M206.500 327.08H209.500M206.500 329.6H209.500M206.500 332.12H209.500M206.500 334.64H209.500M206.500 337.16H209.500M206.500 339.69H209.500M206.500 342.21H209.500M206.500 344.73H209.500M206.500 347.25H209.500M206.500 352.29H209.500M206.500 354.81H209.500M206.500 357.33H209.500M206.500 359.85H209.500M206.500 362.38H209.500M206.500 364.9H209.500M206.500 367.42H209.500M206.500 369.94H209.500M206.500 372.46H209.500M206.500 377.5H209.500M206.500 380.02H209.500M206.500 382.54H209.500M206.500 385.06H209.500M206.500 387.59H209.500M206.500 390.11H209.500M206.500 392.63H209.500M206.500 395.15H209.500M206.500 397.67H209.500M206.500 402.71H209.500M206.500 405.23H209.500M206.500 407.75H209.500M206.500 410.27H209.500M206.500 412.8H209.500M206.500 415.32H209.500M206.500 417.84H209.500M206.500 420.36H209.500M206.500 422.88H209.500M206.500 427.92H209.500M206.500 430.44H209.500M206.500 432.96H209.500M206.500 435.48H209.500M206.500 438H209.500M206.500 440.53H209.500M206.500 443.05H209.500M206.500 445.57H209.500M206.500 448.09H209.500M206.500 453.13H209.500M206.500 455.65H209.500M206.500 458.17H209.500M206.500 460.69H209.500M206.500 463.21H209.500M206.500 465.74H209.500M206.500 468.26H209.500M206.500 470.78H209.500M206.500 473.3H209.500M206.500 478.34H209.500M206.500 480.86H209.500M206.500 483.38H209.500M206.500 485.9H209.500M206.500 488.43H209.500M206.500 490.95H209.500M206.500 493.47H209.500M206.500 495.99H209.500M206.500 498.51H209.500M206.500 503.55H209.500M206.500 506.07H209.500M206.500 508.59H209.500M206.500 511.11H209.500M206.500 513.63H209.500M206.500 516.16H209.500M206.500 518.68H209.500M206.500 521.2H209.500M206.500 523.72H209.500M206.500 528.76H209.500M206.500 531.28H209.500M206.500 533.8H209.500M206.500 536.32H209.500M206.500 538.85H209.500M206.500 541.37H209.500M206.500 543.89H209.500M206.500 546.41H209.500M206.500 548.93H209.500M206.500 553.97H209.500M206.500 556.49H209.500M206.500 559.01H209.500M206.500 561.53H209.500M206.500 564.06H209.500M206.500 566.58H209.500M206.500 569.1H209.500M206.500 571.62H209.500M206.500 574.14H209.500M206.500 579.18H209.500M206.500 581.7H209.500M206.500 584.22H209.500M206.500 586.74H209.500M206.500 589.26H209.500M206.500 591.79H209.500M206.500 594.31H209.500M206.500 596.83H209.500M206.500 599.35H209.500M206.500 604.39H209.500M206.500 606.91H209.500M206.500 609.43H209.500M206.500 611.95H209.500M206.500 614.48H209.500M206.500 617H209.500M206.500 619.52H209.500M206.500 622.04H209.500M206.500 624.56H209.500M206.500 629.6H209.500M206.500 632.12H209.500M206.500 634.64H209.500M206.500 637.16H209.500M206.500 639.68H209.500M206.500 642.21H209.500M206.500 644.73H209.500M206.500 647.25H209.500M206.500 649.77H209.500M206.500 654.81H209.500M206.500 657.33H209.500M206.500 659.85H209.500M206.500 662.37H209.500M206.500 664.89H209.500M206.500 667.42H209.500M206.500 669.94H209.500M206.500 672.46H209.500M206.500 674.98H209.500M206.500 680.02H209.500M206.500 682.54H209.500M206.500 685.06H209.500M206.500 687.58H209.500M206.500 690.11H209.500M206.500 692.63H209.500M206.500 695.15H209.500M206.500 697.67H209.500M206.500 700.19H209.500M206.500 705.23H209.500M206.500 707.75H209.500M206.500 710.27H209.500M206.500 712.79H209.500M206.500 715.32H209.500M206.500 717.84H209.500M206.500 720.36H209.500M206.500 722.88H209.500M206.500 725.4H209.500" stroke="#d0d0d0" stroke-width="0.600"/>
<clipPath id="vr"><rect x="195" y="108" width="14" height="619"/></clipPath><g clip-path="url(#vr)">
<text transform="translate(202.500 96.07) rotate(-90)" font-size="7.400" fill="#a2a2a2">-300</text>
<text transform="translate(202.500 121.28) rotate(-90)" font-size="7.400" fill="#a2a2a2">-200</text>
<text transform="translate(202.500 146.49) rotate(-90)" font-size="7.400" fill="#a2a2a2">-100</text>
<text transform="translate(202.500 171.7) rotate(-90)" font-size="7.400" fill="#a2a2a2">0</text>
<text transform="translate(202.500 196.91) rotate(-90)" font-size="7.400" fill="#a2a2a2">100</text>
<text transform="translate(202.500 222.12) rotate(-90)" font-size="7.400" fill="#a2a2a2">200</text>
<text transform="translate(202.500 247.33) rotate(-90)" font-size="7.400" fill="#a2a2a2">300</text>
<text transform="translate(202.500 272.54) rotate(-90)" font-size="7.400" fill="#a2a2a2">400</text>
<text transform="translate(202.500 297.75) rotate(-90)" font-size="7.400" fill="#a2a2a2">500</text>
<text transform="translate(202.500 322.96) rotate(-90)" font-size="7.400" fill="#a2a2a2">600</text>
<text transform="translate(202.500 348.17) rotate(-90)" font-size="7.400" fill="#a2a2a2">700</text>
<text transform="translate(202.500 373.38) rotate(-90)" font-size="7.400" fill="#a2a2a2">800</text>
<text transform="translate(202.500 398.59) rotate(-90)" font-size="7.400" fill="#a2a2a2">900</text>
<text transform="translate(202.500 423.8) rotate(-90)" font-size="7.400" fill="#a2a2a2">1000</text>
<text transform="translate(202.500 449.01) rotate(-90)" font-size="7.400" fill="#a2a2a2">1100</text>
<text transform="translate(202.500 474.22) rotate(-90)" font-size="7.400" fill="#a2a2a2">1200</text>
<text transform="translate(202.500 499.43) rotate(-90)" font-size="7.400" fill="#a2a2a2">1300</text>
<text transform="translate(202.500 524.64) rotate(-90)" font-size="7.400" fill="#a2a2a2">1400</text>
<text transform="translate(202.500 549.85) rotate(-90)" font-size="7.400" fill="#a2a2a2">1500</text>
<text transform="translate(202.500 575.06) rotate(-90)" font-size="7.400" fill="#a2a2a2">1600</text>
<text transform="translate(202.500 600.27) rotate(-90)" font-size="7.400" fill="#a2a2a2">1700</text>
<text transform="translate(202.500 625.48) rotate(-90)" font-size="7.400" fill="#a2a2a2">1800</text>
<text transform="translate(202.500 650.69) rotate(-90)" font-size="7.400" fill="#a2a2a2">1900</text>
<text transform="translate(202.500 675.9) rotate(-90)" font-size="7.400" fill="#a2a2a2">2000</text>
<text transform="translate(202.500 701.11) rotate(-90)" font-size="7.400" fill="#a2a2a2">2100</text>
<text transform="translate(202.500 726.32) rotate(-90)" font-size="7.400" fill="#a2a2a2">2200</text>
<text transform="translate(202.500 751.53) rotate(-90)" font-size="7.400" fill="#a2a2a2">2300</text>
</g>
<rect x="195.500" y="95" width="14" height="12.500" fill="#fff"/>
<path d="M209.500 94V107.500" stroke="#dedede" stroke-width="1"/>
</svg>
<div class="abs" style="left:222px;top:689px;width:87px;height:26px;border-radius:4px;background:#fff"></div>
<div class="abs" style="left:231px;top:701.500px;width:7px;height:1.300px;background:#222"></div>
<div class="abs" style="left:245px;top:697px;width:42px;text-align:center;font:bold 8.300px 'Liberation Sans',sans-serif;color:#222;line-height:11px">33.3%</div>
<svg class="abs" style="left:292px;top:699px" width="7" height="7" viewBox="0 0 7 7"><path d="M3.500 0V7M0 3.500H7" stroke="#222" stroke-width="1.300"/></svg>
<div class="abs" style="left:316px;top:689px;width:53px;height:26px;border-radius:4px;background:#fff"></div>
<svg class="abs" style="left:323px;top:696px" width="12" height="13" viewBox="0 0 12 13"><path d="M2.500 4.500H6.500A4 4 0 0 1 6.500 12.300H4.500" fill="none" stroke="#111" stroke-width="1.500"/><path d="M5.200 0.800L1.200 4.500L5.200 8.200" fill="none" stroke="#111" stroke-width="1.500"/></svg>
<svg class="abs" style="left:350px;top:696px" width="12" height="13" viewBox="0 0 12 13"><path d="M9.500 4.500H5.500A4 4 0 0 0 5.500 12.300H7.500" fill="none" stroke="#c4c4c4" stroke-width="1.500"/><path d="M6.800 0.800L10.800 4.500L6.800 8.200" fill="none" stroke="#c4c4c4" stroke-width="1.500"/></svg>
<div class="abs" style="left:703px;top:692.500px;width:56px;height:22.500px;border-radius:12px;background:#fff;border:2px solid #1a6fe0"></div>
<svg class="abs" style="left:714px;top:698px" width="11" height="11" viewBox="0 0 11 11"><path d="M1.200 0.700H9.800A0.700 0.700 0 0 1 10.500 1.400V7A0.700 0.700 0 0 1 9.800 7.700H3.500L0.700 10.200V1.400A0.700 0.700 0 0 1 1.200 0.700Z" fill="none" stroke="#1a6fe0" stroke-width="1.100"/><path d="M3 4.200H4M5 4.200H6M7 4.200H8" stroke="#1a6fe0" stroke-width="1"/></svg>
<div class="abs" style="left:728px;top:698px;font-size:9.800px;color:#1a6fe0;line-height:12px">Chat</div>

<!-- ===== RIGHT PANEL ===== -->
<div id="rpanel" class="abs"></div>
<div class="abs" style="left:773px;top:94px;width:196px;height:18px;background:#fdfdfd;border-top:1px solid #e4e4e4;border-bottom:1px solid #e4e4e4"></div>
<div class="abs sech" style="left:780.300px;top:99.0px;font-size:7.300px;line-height:8px">PAGE SETTINGS</div>
<div class="abs" style="left:773px;top:268px;width:196px;height:19px;background:#fdfdfd;border-top:1px solid #e4e4e4;border-bottom:1px solid #e4e4e4"></div>
<div class="abs sech" style="left:780.300px;top:273.5px;font-size:7.300px;line-height:8px">DEFAULT TEXT SETTINGS</div>
<div class="abs" style="left:773px;top:379px;width:196px;height:19px;background:#fdfdfd;border-top:1px solid #e4e4e4;border-bottom:1px solid #e4e4e4"></div>
<div class="abs sech" style="left:780.300px;top:384.5px;font-size:7.300px;line-height:8px">REPLACE COLORS</div>
<div class="abs inp" style="left:782px;top:126px;width:177px;height:21px;border-radius:3px"></div>
<svg class="abs" style="left:787px;top:131px" width="8" height="11" viewBox="0 0 8 11"><path d="M1.200 0.600H5L7.400 3V9.600A0.800 0.800 0 0 1 6.600 10.400H1.400A0.800 0.800 0 0 1 0.600 9.600V1.400A0.800 0.800 0 0 1 1.200 0.600Z" fill="none" stroke="#888" stroke-width="1"/><path d="M2.500 7.500H3.300M4.700 7.500H5.500" stroke="#888" stroke-width="1"/></svg>
<div class="abs" style="left:803px;top:130.500px;font-size:9.750px;color:#222;line-height:12px">Custom</div>
<svg class="abs" style="left:948px;top:134.5px" width="5.6" height="4.5" viewBox="0 0 5.6 4.5"><path d="M0 0H5.6L2.8 4.5Z" fill="#555"/></svg>
<div class="abs inp" style="left:782px;top:152px;width:69.500px;height:18.700px;border-radius:3px"></div>
<svg class="abs" style="left:787px;top:158.500px" width="9" height="6" viewBox="0 0 9 6"><path d="M1 3H8M2.800 0.800L0.700 3L2.800 5.200M6.200 0.800L8.300 3L6.200 5.200" fill="none" stroke="#555" stroke-width="1"/></svg>
<div class="abs" style="left:800.500px;top:155.500px;font-size:9.600px;color:#222;line-height:12px">2000</div>
<div class="abs inp" style="left:782px;top:178px;width:69.500px;height:19px;border-radius:3px"></div>
<svg class="abs" style="left:788.500px;top:183px" width="6" height="10" viewBox="0 0 6 10"><path d="M3 1V9M0.800 2.800L3 0.700L5.200 2.800M0.800 7.200L3 9.300L5.200 7.200" fill="none" stroke="#555" stroke-width="1"/></svg>
<div class="abs" style="left:800.500px;top:181.500px;font-size:9.600px;color:#222;line-height:12px">1500</div>
<div class="abs" style="left:852px;top:161.500px;width:10px;height:27px;border:1px solid #e2e2e2;border-left:none;border-radius:0 2px 2px 0"></div>
<div class="abs" style="left:858px;top:170px;width:10px;height:11px;background:#f7f7f7"></div>
<svg class="abs" style="left:859px;top:169.500px" width="9" height="11" viewBox="0 0 9 11"><rect x="0" y="5" width="7.400" height="6" rx=".8" fill="#555"/><path d="M2.800 5.200V3.200a2 2 0 0 1 4 0V4.200" stroke="#555" stroke-width="1.100" fill="none"/><circle cx="3.700" cy="7.800" r=".9" fill="#f7f7f7"/></svg>
<svg class="abs" style="left:901.500px;top:156.500px" width="10" height="12" viewBox="0 0 10 12"><path d="M1.500 0.600H6L9.200 3.600V10.600A0.900 0.900 0 0 1 8.300 11.400H1.500A0.900 0.900 0 0 1 0.600 10.500V1.500A0.900 0.900 0 0 1 1.500 0.600Z" fill="none" stroke="#888" stroke-width="1.100"/></svg>
<div class="abs" style="left:925px;top:152px;width:34.500px;height:21px;background:#fefefe;border-radius:2px"></div>
<svg class="abs" style="left:936px;top:158px" width="12" height="9" viewBox="0 0 12 9"><path d="M1.500 0.600H8.600L11.400 3.400V7.500A0.900 0.900 0 0 1 10.500 8.400H1.500A0.900 0.900 0 0 1 0.600 7.500V1.500A0.900 0.900 0 0 1 1.500 0.600Z" fill="none" stroke="#888" stroke-width="1.100"/></svg>
<div class="abs" style="left:888.500px;top:178px;width:71px;height:19px;border:1px solid #dcdcdc;border-radius:3px;background:#fafafa"></div>
<svg class="abs" style="left:893.5px;top:182.5px" width="11" height="11" viewBox="0 0 11 11"><path d="M4.200 0.600L7.800 4.200L4.500 7.500Q3.800 8 3.200 7.500L0.900 5.200Q0.400 4.600 0.900 4L4.200 0.600Z" fill="none" stroke="#555" stroke-width="0.900"/><path d="M1.200 4.600H7.400L4.400 7.500Q3.800 8 3.200 7.500Z" fill="#555"/><path d="M8.800 5.600Q9.800 7 9.800 7.600A1 1 0 0 1 7.800 7.600Q7.800 7 8.800 5.600Z" fill="#555"/><rect x="0" y="9.800" width="11" height="1" fill="#777"/></svg>
<div class="abs" style="left:906.500px;top:179px;width:51.500px;height:17px;border:1px solid #ccc;border-radius:2px;background:#fff"></div>
<div class="abs link" style="left:782.500px;top:203.500px;font-size:9.800px;line-height:12px">Fit page to content...</div>
<div class="abs link" style="left:782.500px;top:221.800px;font-size:9.800px;line-height:12px">Reset page view</div>
<div class="abs" style="left:782.500px;top:241px;width:10px;height:10px;border:1px solid #a0a0a0;border-radius:2px;background:#fff"></div>
<div class="abs" style="left:795.500px;top:239.700px;font-size:9.800px;color:#777;line-height:12px;white-space:nowrap">Hide content outside page borders</div>
<div class="abs inp" style="left:782.500px;top:301px;width:110px;height:19px;border-radius:3px"></div>
<div class="abs" style="left:787.800px;top:304.800px;font-size:9.600px;color:#a0a0a0;line-height:12px">Font family</div>
<div class="abs" style="left:876.500px;top:302px;width:1px;height:17px;background:#d0d0d0"></div>
<svg class="abs" style="left:880.5px;top:307.8px" width="7" height="6.6" viewBox="0 0 7 6.6"><path d="M0 0H7L3.5 6.6Z" fill="#444"/></svg>
<div class="abs inp" style="left:897px;top:301px;width:62.500px;height:19px;border-radius:3px"></div>
<div class="abs" style="left:901.500px;top:305.500px;font-size:7.600px;color:#222;line-height:10px">None</div>
<div class="abs" style="left:943.500px;top:302px;width:1px;height:17px;background:#d0d0d0"></div>
<svg class="abs" style="left:947.5px;top:307.8px" width="7" height="6.6" viewBox="0 0 7 6.6"><path d="M0 0H7L3.5 6.6Z" fill="#444"/></svg>
<div class="abs" style="left:782.500px;top:326.500px;width:85.500px;height:19px;border:1px solid #dcdcdc;border-radius:3px;background:#fafafa"></div>
<svg class="abs" style="left:786px;top:330.5px" width="11" height="11" viewBox="0 0 11 11"><path d="M4.200 0.600L7.800 4.200L4.500 7.500Q3.800 8 3.200 7.500L0.900 5.200Q0.400 4.600 0.900 4L4.200 0.600Z" fill="none" stroke="#555" stroke-width="0.900"/><path d="M1.200 4.600H7.400L4.400 7.500Q3.800 8 3.200 7.500Z" fill="#555"/><path d="M8.800 5.600Q9.800 7 9.800 7.600A1 1 0 0 1 7.800 7.600Q7.800 7 8.800 5.600Z" fill="#555"/><rect x="0" y="9.800" width="11" height="1" fill="#777"/></svg>
<div class="abs" style="left:801.500px;top:327.500px;width:65px;height:17px;border:1px solid #ccc;border-radius:2px;background:#fff;font-size:7px;color:#555;text-align:center;line-height:16px">?</div>
<div class="abs inp" style="left:873.500px;top:326.500px;width:86px;height:19px;border-radius:3px"></div>
<div class="abs" style="left:877.500px;top:331.800px;font:bold 7.500px 'Liberation Sans',sans-serif;color:#666;line-height:8px;letter-spacing:-.3px"><span style="font-size:5.500px">T</span>T</div>
<div class="abs" style="left:889px;top:330.300px;font-size:9.600px;color:#a0a0a0;line-height:12px;white-space:nowrap">Not set</div>
<div class="abs" style="left:933.500px;top:333.500px;font-size:4.500px;color:#c8c8c8;line-height:6px">PX</div>
<div class="abs" style="left:943.500px;top:327.500px;width:1px;height:17px;background:#d0d0d0"></div>
<svg class="abs" style="left:947.5px;top:333.3px" width="7" height="6.6" viewBox="0 0 7 6.6"><path d="M0 0H7L3.5 6.6Z" fill="#444"/></svg>
<div class="abs link" style="left:782.500px;top:351.300px;font-size:9.800px;line-height:12px">Reset defaults</div>
<div class="abs" style="left:787.500px;top:407.800px;font:bold 9.700px 'Liberation Sans',sans-serif;color:#1a6fe0;line-height:12px;white-space:nowrap">Current Page</div>
<div class="abs" style="left:783px;top:426px;width:73px;height:1.500px;background:#1a6fe0"></div>
<div class="abs" style="left:861.500px;top:407.800px;font-size:9.750px;color:#888;line-height:12px;white-space:nowrap">Entire Project</div>
<div class="abs" style="left:782.5px;top:441px;width:10px;height:10px;border-radius:2px;background:#1a6fe0"></div>
<svg class="abs" style="left:784.0px;top:443px" width="7" height="6" viewBox="0 0 7 6"><path d="M0.800 3L2.700 4.900L6.300 0.900" fill="none" stroke="#fff" stroke-width="1.300"/></svg>
<div class="abs" style="left:795.6px;top:440px;font-size:9.750px;color:#222;line-height:12px;white-space:nowrap">Fills</div>
<div class="abs" style="left:834px;top:441px;width:10px;height:10px;border-radius:2px;background:#1a6fe0"></div>
<svg class="abs" style="left:835.5px;top:443px" width="7" height="6" viewBox="0 0 7 6"><path d="M0.800 3L2.700 4.900L6.300 0.900" fill="none" stroke="#fff" stroke-width="1.300"/></svg>
<div class="abs" style="left:847.3px;top:440px;font-size:9.750px;color:#222;line-height:12px;white-space:nowrap">Strokes</div>
<div class="abs" style="left:902px;top:441px;width:10px;height:10px;border-radius:2px;background:#1a6fe0"></div>
<svg class="abs" style="left:903.5px;top:443px" width="7" height="6" viewBox="0 0 7 6"><path d="M0.800 3L2.700 4.900L6.300 0.900" fill="none" stroke="#fff" stroke-width="1.300"/></svg>
<div class="abs" style="left:915.3px;top:440px;font-size:9.750px;color:#222;line-height:12px;white-space:nowrap">Text Color</div>
<div class="abs" style="left:782.30px;top:466px;width:16.08px;height:16px;background:#f5f5f5"></div>
<div class="abs" style="left:798.08px;top:466px;width:16.08px;height:16px;background:#8ec6ff"></div>
<div class="abs" style="left:813.86px;top:466px;width:16.08px;height:16px;background:#1e90ff"></div>
<div class="abs" style="left:829.64px;top:466px;width:16.08px;height:16px;background:#23425e"></div>
<div class="abs" style="left:845.42px;top:466px;width:16.08px;height:16px;background:#0a64e6"></div>
<div class="abs" style="left:861.20px;top:466px;width:16.08px;height:16px;background:#ffffff"></div>
<div class="abs" style="left:876.98px;top:466px;width:16.08px;height:16px;background:#ffffff"></div>
<div class="abs" style="left:892.76px;top:466px;width:16.08px;height:16px;background:#eeeeee"></div>
<div class="abs" style="left:908.54px;top:466px;width:16.08px;height:16px;background:#e6e6e6"></div>
<div class="abs" style="left:924.32px;top:466px;width:16.08px;height:16px;background:#cccccc"></div>
<div class="abs" style="left:782.30px;top:481.800px;width:16.08px;height:15.800px;background:#c6c6c6"></div>
<div class="abs" style="left:798.08px;top:481.800px;width:16.08px;height:15.800px;background:#b4b4b4"></div>
<div class="abs" style="left:813.86px;top:481.800px;width:16.08px;height:15.800px;background:#aaaaaa"></div>
<div class="abs" style="left:829.64px;top:481.800px;width:16.08px;height:15.800px;background:#666666"></div>
<div class="abs" style="left:845.42px;top:481.800px;width:16.08px;height:15.800px;background:#222222"></div>
<div class="abs" style="left:861.20px;top:481.800px;width:16.08px;height:15.800px;background:#0a0a0a"></div>
<div class="abs" style="left:876.98px;top:481.800px;width:16.08px;height:15.800px;background:#000000"></div>
<div class="abs" style="left:782.500px;top:502.300px;font-size:9.850px;color:#999;line-height:13.800px;white-space:nowrap">Click on any color above to replace it on<br>the current page</div>

<div id="botstrip" class="abs" style="left:0;top:727px;width:969px;height:3px;background:#0a0a0a"></div>
</div></body></html>
